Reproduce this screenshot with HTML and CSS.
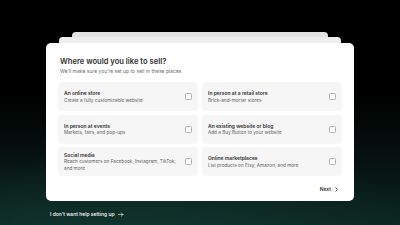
FILE: index.html
```html
<!DOCTYPE html>
<html>
<head>
<meta charset="utf-8">
<link rel="stylesheet" href="styles.css">
</head>
<body>
<div class="page">
  <div class="stack stack-3"></div>
  <div class="stack stack-2"></div>
  <div class="card">
    <div class="header">
      <h1 class="title">Where would you like to sell?</h1>
      <p class="subtitle">We’ll make sure you’re set up to sell in these places</p>
    </div>
    <div class="grid">
      <label class="option">
        <div class="option-text">
          <div class="option-title">An online store</div>
          <div class="option-desc">Create a fully customizable website</div>
        </div>
        <span class="check"></span>
      </label>
      <label class="option">
        <div class="option-text">
          <div class="option-title">In person at a retail store</div>
          <div class="option-desc">Brick-and-mortar stores</div>
        </div>
        <span class="check"></span>
      </label>
      <label class="option">
        <div class="option-text">
          <div class="option-title">In person at events</div>
          <div class="option-desc">Markets, fairs, and pop-ups</div>
        </div>
        <span class="check"></span>
      </label>
      <label class="option">
        <div class="option-text">
          <div class="option-title">An existing website or blog</div>
          <div class="option-desc">Add a Buy Button to your website</div>
        </div>
        <span class="check"></span>
      </label>
      <label class="option">
        <div class="option-text">
          <div class="option-title">Social media</div>
          <div class="option-desc">Reach customers on Facebook, Instagram, TikTok, and more</div>
        </div>
        <span class="check"></span>
      </label>
      <label class="option">
        <div class="option-text">
          <div class="option-title">Online marketplaces</div>
          <div class="option-desc">List products on Etsy, Amazon, and more</div>
        </div>
        <span class="check"></span>
      </label>
    </div>
    <div class="footer">
      <button class="next">Next
        <svg class="chev" viewBox="0 0 10 10" width="5" height="5"><path d="M3.5 1.5 L7 5 L3.5 8.5" fill="none" stroke="#303030" stroke-width="1.4" stroke-linecap="round" stroke-linejoin="round"/></svg>
      </button>
    </div>
  </div>
  <div class="skip">
    <a class="skip-link">I don’t want help setting up
      <svg viewBox="0 0 12 10" width="6" height="5"><path d="M1 5 H10 M6.5 1.5 L10 5 L6.5 8.5" fill="none" stroke="#fff" stroke-width="1.2" stroke-linecap="round" stroke-linejoin="round"/></svg>
    </a>
  </div>
</div>
</body>
</html>
```

FILE: styles.css
```css
* { box-sizing: border-box; }
html, body { margin: 0; padding: 0; }
body {
  width: 400px;
  height: 225px;
  overflow: hidden;
  font-family: Inter, "Noto Sans", sans-serif;
  background:
    radial-gradient(ellipse 320px 90px at 130px 240px, rgba(20, 60, 52, 0.75), rgba(20, 60, 52, 0) 100%),
    linear-gradient(to bottom, #000 0%, #000 40%, #06110f 70%, #0c2521 100%);
}
.page {
  display: flex;
  flex-direction: column;
  align-items: center;
  padding-top: 32px;
}
.stack {
  border-radius: 4px 4px 0 0;
}
.stack-3 {
  width: 256px;
  height: 5px;
  background: #e4e4e4;
}
.stack-2 {
  width: 282px;
  height: 6px;
  background: #eeeeee;
}
.card {
  width: 308px;
  height: 158px;
  background: #fff;
  border-radius: 5px;
  padding: 12px 12px 0 12px;
  display: flex;
  flex-direction: column;
}
.header {
  padding-left: 2px;
  padding-top: 0.5px;
  height: 27px;
}
.title {
  margin: 0;
  font-size: 7.6px;
  line-height: 12px;
  font-weight: 600;
  color: #303030;
}
.subtitle {
  margin: 0.5px 0 0;
  font-size: 5px;
  line-height: 7px;
  color: #6d6d6d;
}
.grid {
  display: grid;
  grid-template-columns: 140px 140px;
  grid-auto-rows: 29px;
  column-gap: 4px;
  row-gap: 3.5px;
}
.option {
  background: #f6f6f6;
  border-radius: 4px;
  display: flex;
  align-items: center;
  padding: 0 6px;
  gap: 6px;
}
.option-text {
  flex: 1;
  min-width: 0;
}
.option-title {
  font-size: 5px;
  line-height: 6.5px;
  font-weight: 600;
  color: #303030;
}
.option-desc {
  font-size: 4.7px;
  line-height: 6.3px;
  color: #616161;
}
.check {
  width: 7px;
  height: 7px;
  border: 0.7px solid #b3b3b3;
  border-radius: 1.5px;
  background: #fff;
  flex: none;
}
.footer {
  display: flex;
  justify-content: flex-end;
  padding-top: 8px;
  padding-right: 1px;
}
.next {
  border: 0;
  background: none;
  padding: 2px;
  font-family: inherit;
  font-size: 5px;
  font-weight: 600;
  color: #303030;
  display: flex;
  align-items: center;
  gap: 3px;
}
.chev { display: block; }
.skip {
  width: 308px;
  padding: 10px 4px 0;
  font-size: 5px;
  line-height: 7px;
}
.skip-link {
  display: inline-flex;
  align-items: center;
  gap: 3px;
  font-size: 5px;
  line-height: 7px;
  font-weight: 500;
  color: #fff;
}
```
